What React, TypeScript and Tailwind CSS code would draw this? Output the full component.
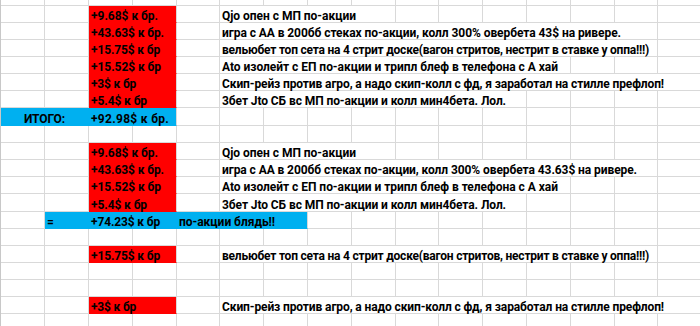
import React, { useLayoutEffect, useRef, useState } from 'react'

type Seg = {
  span: number
  text?: string
  w?: number // ширина текста как в Excel (Calibri), подгоняем трекингом
  fill?: 'red' | 'blue'
  center?: boolean
}

type Row = { h: 6 | 17 | 18; segs: Seg[] }

const COLS = 16

const spanCls: Record<number, string> = {
  1: 'col-span-1',
  2: 'col-span-2',
  3: 'col-span-3',
  4: 'col-span-4',
  5: 'col-span-5',
  6: 'col-span-6',
  7: 'col-span-7',
  8: 'col-span-8',
  9: 'col-span-9',
  10: 'col-span-10',
  11: 'col-span-11',
  12: 'col-span-12',
}

const heightCls = {
  6: 'h-[6px]',
  17: 'h-[17px]',
  18: 'h-[18px]',
}

// красная ячейка на две колонки + описание, растянутое до конца текста
function money(
  text: string,
  w: number,
  desc: string,
  dw: number,
  descSpan: number,
  h: 17 | 18 = 17
): Row {
  return {
    h,
    segs: [
      { span: 1 },
      { span: 1 },
      { span: 2, text, w, fill: 'red' },
      { span: 1 },
      { span: descSpan, text: desc, w: dw },
    ],
  }
}

const empty = (h: 6 | 17 | 18 = 17): Row => ({ h, segs: [] })

const rows: Row[] = [
  empty(6),
  money('+9.68$ к бр.', 67, 'Qjo опен с МП по-акции', 134, 4),
  money('+43.63$ к бр.', 73, 'игра с АА в 200бб стеках по-акции, колл 300% овербета 43$ на ривере.', 399, 10),
  money('+15.75$ к бр', 69, 'вельюбет топ сета на 4 стрит доске(вагон стритов, нестрит в ставке у оппа!!!)', 427, 10),
  money('+15.52$ к бр', 70, 'Ato изолейт с ЕП по-акции и трипл блеф в телефона с А хай', 336, 8),
  money('+3$ к бр', 45, 'Скип-рейз против агро, а надо скип-колл с фд, я заработал на стилле префлоп!', 442, 11),
  money('+5.4$ к бр', 56, '3бет Jto СБ вс МП по-акции и колл мин4бета. Лол.', 284, 7),
  {
    h: 18,
    segs: [
      { span: 2, text: 'ИТОГО:', w: 41, fill: 'blue', center: true },
      { span: 2, text: '+92.98$ к бр.', w: 78, fill: 'blue' },
    ],
  },
  empty(),
  money('+9.68$ к бр.', 67, 'Qjo опен с МП по-акции', 134, 4),
  money('+43.63$ к бр.', 73, 'игра с АА в 200бб стеках по-акции, колл 300% овербета 43.63$ на ривере.', 415, 10),
  money('+15.52$ к бр', 70, 'Ato изолейт с ЕП по-акции и трипл блеф в телефона с А хай', 336, 8),
  money('+5.4$ к бр', 56, '3бет Jto СБ вс МП по-акции и колл мин4бета. Лол.', 284, 7, 18),
  {
    h: 17,
    segs: [
      { span: 1 },
      { span: 1, text: '=', fill: 'blue' },
      { span: 2, text: '+74.23$ к бр', w: 69, fill: 'blue' },
      { span: 3, text: 'по-акции блядь!!', w: 96, fill: 'blue' },
    ],
  },
  empty(),
  money('+15.75$ к бр', 69, 'вельюбет топ сета на 4 стрит доске(вагон стритов, нестрит в ставке у оппа!!!)', 427, 10),
  empty(),
  empty(),
  money('+3$ к бр', 45, 'Скип-рейз против агро, а надо скип-колл с фд, я заработал на стилле префлоп!', 442, 11),
  empty(),
]

// Calibri у нас нет — подгоняем ширину строки межбуквенным интервалом
function Fit({ text, w }: { text: string; w?: number }) {
  const ref = useRef<HTMLSpanElement>(null)
  const [ls, setLs] = useState(0)

  useLayoutEffect(() => {
    const el = ref.current
    if (!el || !w) return
    const measure = () => {
      const prev = el.style.letterSpacing
      el.style.letterSpacing = '0px'
      const natural = el.getBoundingClientRect().width
      el.style.letterSpacing = prev
      setLs(Math.round(((w - natural) / text.length) * 1000) / 1000)
    }
    measure()
    document.fonts?.ready.then(measure)
  }, [text, w])

  return (
    <span ref={ref} style={w ? { letterSpacing: `${ls}px` } : undefined}>
      {text}
    </span>
  )
}

function SheetRow({ row }: { row: Row }) {
  // добиваем пустыми ячейками до 16 колонок
  const used = row.segs.reduce((s, x) => s + x.span, 0)
  const cells: Seg[] = [...row.segs]
  for (let i = used; i < COLS; i++) cells.push({ span: 1 })

  return (
    <div
      className={`grid grid-cols-[44px_44px_44px_44px_43px_44px_44px_44px_44px_43px_44px_44px_44px_44px_43px_44px] ${heightCls[row.h]}`}
    >
      {cells.map((c, i) => {
        const isRed = c.fill === 'red'
        const isBlue = c.fill === 'blue'
        const nextBlue = cells[i + 1]?.fill === 'blue'
        return (
          <div
            key={i}
            className={[
              spanCls[c.span],
              'relative border-b border-r',
              isRed
                ? 'bg-[#ff0000] border-b-[#ff0000] border-r-[#d9d9d9]'
                : isBlue
                ? `bg-[#00b0f0] border-b-[#00b0f0] ${nextBlue ? 'border-r-[#00b0f0]' : 'border-r-[#d9d9d9]'}`
                : 'border-[#d9d9d9]',
            ].join(' ')}
          >
            {c.text && (
              <div
                className={`absolute bottom-[-1px] whitespace-nowrap text-[12px] leading-[14px] font-bold text-black ${
                  c.center ? 'left-0 right-0 text-center' : 'left-[2px]'
                }`}
              >
                <Fit text={c.text} w={c.w} />
              </div>
            )}
          </div>
        )
      })}
    </div>
  )
}

export default function App() {
  return (
    <div className="w-[700px] h-[326px] overflow-hidden bg-white font-['Roboto','Liberation_Sans',sans-serif]">
      <div className="border-l border-l-[#c8c8c8]">
        {rows.map((r, i) => (
          <SheetRow key={i} row={r} />
        ))}
      </div>
    </div>
  )
}
